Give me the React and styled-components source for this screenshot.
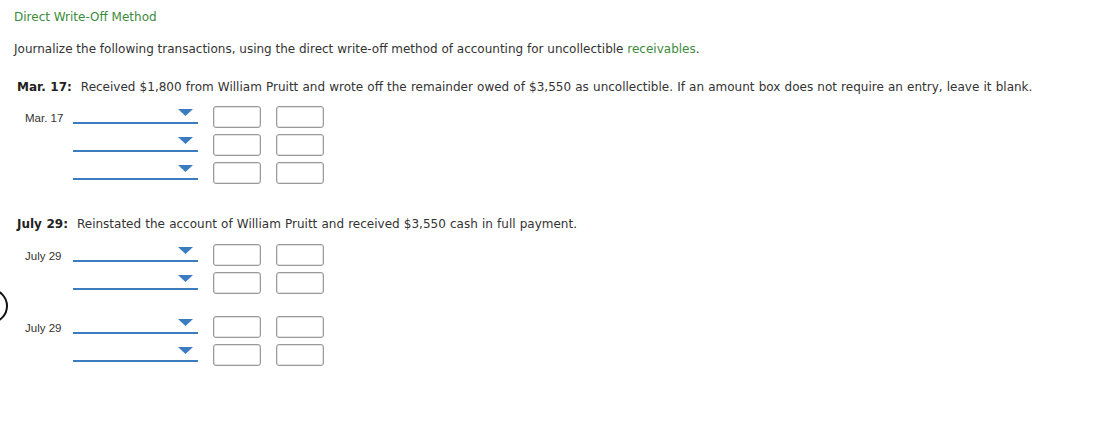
import React from 'react';
import styled, { createGlobalStyle } from 'styled-components';

const Global = createGlobalStyle`
  body {
    margin: 0;
    background: #fff;
    font-family: "DejaVu Sans", Verdana, sans-serif;
    color: #333;
  }
`;

const Page = styled.div`
  position: relative;
  width: 1116px;
  height: 437px;
  padding: 10px 0 0 14px;
  box-sizing: border-box;
  overflow: hidden;
`;

const Title = styled.div`
  font-size: 12px;
  line-height: 14px;
  color: #3d8b3d;
`;

const Intro = styled.p`
  margin: 18px 0 0;
  font-size: 12px;
  line-height: 14px;
`;

const Green = styled.span`
  color: #3d8b3d;
`;

const Prompt = styled.p`
  margin: ${(p) => p.$top}px 0 0 3px;
  font-size: 12px;
  line-height: 14px;
  word-spacing: 0.35px;
  b {
    margin-right: 9px;
    color: #222;
  }
`;

const Entry = styled.div`
  display: flex;
  flex-direction: column;
  gap: 6px;
  margin-top: ${(p) => p.$top}px;
`;

const Row = styled.div`
  display: flex;
  align-items: center;
  height: 22px;
`;

const DateLabel = styled.div`
  width: 48px;
  padding-left: 11px;
  padding-top: 2px;
  font-family: "Liberation Sans", Arial, sans-serif;
  font-size: 11.5px;
  color: #333;
`;

const Select = styled.div`
  align-self: flex-start;
  width: 125px;
  height: 18px;
  border-bottom: 2px solid #3b7cc0;
  display: flex;
  justify-content: flex-end;
  align-items: flex-start;
  padding: 3px 5px 0 0;
  box-sizing: border-box;
`;

const Amount = styled.div`
  width: 48px;
  height: 22px;
  margin-left: 15px;
  border: 1px solid #9a9a9a;
  border-radius: 3px;
  box-sizing: border-box;
  box-shadow: inset 0 0 0 0.5px #c8c8c8;
`;

const Ring = styled.svg`
  position: absolute;
  left: 0;
  top: 288px;
`;

function Caret() {
  return (
    <svg width="15" height="7" viewBox="0 0 15 7">
      <polygon points="0,0 15,0 7.5,7" fill="#3b7cc0" />
    </svg>
  );
}

function Line({ label }) {
  return (
    <Row>
      <DateLabel>{label}</DateLabel>
      <Select>
        <Caret />
      </Select>
      <Amount />
      <Amount />
    </Row>
  );
}

export default function App() {
  return (
    <Page>
      <Global />
      <Ring width="10" height="36" viewBox="0 0 10 36">
        <circle cx="-9.5" cy="18" r="16.5" fill="none" stroke="#111" strokeWidth="2" />
      </Ring>
      <Title>Direct Write-Off Method</Title>
      <Intro>
        Journalize the following transactions, using the direct write-off method of accounting for uncollectible{' '}
        <Green>receivables</Green>.
      </Intro>
      <Prompt $top={24}>
        <b>Mar. 17:</b>Received $1,800 from William Pruitt and wrote off the remainder owed of $3,550 as uncollectible. If an amount box does not require an entry, leave it blank.
      </Prompt>
      <Entry $top={12}>
        <Line label="Mar. 17" />
        <Line />
        <Line />
      </Entry>
      <Prompt $top={33}>
        <b>July 29:</b>Reinstated the account of William Pruitt and received $3,550 cash in full payment.
      </Prompt>
      <Entry $top={13}>
        <Line label="July 29" />
        <Line />
      </Entry>
      <Entry $top={22}>
        <Line label="July 29" />
        <Line />
      </Entry>
    </Page>
  );
}
